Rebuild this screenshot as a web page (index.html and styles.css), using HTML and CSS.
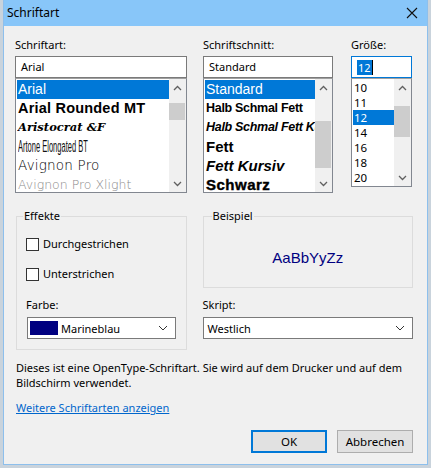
FILE: index.html
```html
<!DOCTYPE html>
<html lang="de">
<head>
<meta charset="utf-8">
<title>Schriftart</title>
<link rel="stylesheet" href="styles.css">
</head>
<body>
<div class="window">
  <div class="titlebar">
    <span class="title">Schriftart</span>
    <svg class="close" width="12" height="12" viewBox="0 0 12 12"><path d="M1 1 L11 11 M11 1 L1 11" stroke="#111" stroke-width="1.1" fill="none"/></svg>
  </div>
  <div class="content">
    <div class="top-row">
      <div class="col col-font">
        <div class="label">Schriftart:</div>
        <div class="edit">Arial</div>
        <div class="list list-font">
          <div class="items">
            <div class="item sel f-arial">Arial</div>
            <div class="item f-rounded">Arial Rounded MT</div>
            <div class="item f-aristo">Aristocrat &amp;F</div>
            <div class="item f-artone"><span>Artone Elongated BT</span></div>
            <div class="item f-avignon">Avignon Pro</div>
            <div class="item f-xlight">Avignon Pro Xlight</div>
          </div>
          <div class="scrollbar">
            <div class="sb-btn"><svg width="9" height="6" viewBox="0 0 9 6"><path d="M1 5 L4.5 1.5 L8 5" stroke="#606060" stroke-width="1.3" fill="none"/></svg></div>
            <div class="track"><div class="thumb"></div></div>
            <div class="sb-btn"><svg width="9" height="6" viewBox="0 0 9 6"><path d="M1 1 L4.5 4.5 L8 1" stroke="#606060" stroke-width="1.3" fill="none"/></svg></div>
          </div>
        </div>
      </div>
      <div class="col col-style">
        <div class="label">Schriftschnitt:</div>
        <div class="edit">Standard</div>
        <div class="list list-style">
          <div class="items">
            <div class="item sel s-std">Standard</div>
            <div class="item s-hsf">Halb Schmal Fett</div>
            <div class="item s-hsfk">Halb Schmal Fett Kursiv</div>
            <div class="item s-fett">Fett</div>
            <div class="item s-fk">Fett Kursiv</div>
            <div class="item s-schwarz">Schwarz</div>
          </div>
          <div class="scrollbar">
            <div class="sb-btn"><svg width="9" height="6" viewBox="0 0 9 6"><path d="M1 5 L4.5 1.5 L8 5" stroke="#606060" stroke-width="1.3" fill="none"/></svg></div>
            <div class="track"><div class="thumb"></div></div>
            <div class="sb-btn"><svg width="9" height="6" viewBox="0 0 9 6"><path d="M1 1 L4.5 4.5 L8 1" stroke="#606060" stroke-width="1.3" fill="none"/></svg></div>
          </div>
        </div>
      </div>
      <div class="col col-size">
        <div class="label">Größe:</div>
        <div class="edit edit-focus"><span class="seltext">12</span><span class="caret"></span></div>
        <div class="list list-size">
          <div class="items">
            <div class="item">10</div>
            <div class="item">11</div>
            <div class="item sel">12</div>
            <div class="item">14</div>
            <div class="item">16</div>
            <div class="item">18</div>
            <div class="item">20</div>
          </div>
          <div class="scrollbar">
            <div class="sb-btn"><svg width="9" height="6" viewBox="0 0 9 6"><path d="M1 5 L4.5 1.5 L8 5" stroke="#606060" stroke-width="1.3" fill="none"/></svg></div>
            <div class="track"><div class="thumb"></div></div>
            <div class="sb-btn"><svg width="9" height="6" viewBox="0 0 9 6"><path d="M1 1 L4.5 4.5 L8 1" stroke="#606060" stroke-width="1.3" fill="none"/></svg></div>
          </div>
        </div>
      </div>
    </div>

    <div class="mid-row">
      <fieldset class="group effects">
        <legend>Effekte</legend>
        <div class="check"><span class="box"></span>Durchgestrichen</div>
        <div class="check check2"><span class="box"></span>Unterstrichen</div>
        <div class="label farbe">Farbe:</div>
        <div class="combo combo-color">
          <span class="swatch"></span><span class="combo-text">Marineblau</span>
          <svg class="chev" width="10" height="6" viewBox="0 0 10 6"><path d="M1 1 L5 5 L9 1" stroke="#333" stroke-width="1" fill="none"/></svg>
        </div>
      </fieldset>
      <div class="right-col">
        <fieldset class="group sample">
          <legend>Beispiel</legend>
          <div class="sample-text">AaBbYyZz</div>
        </fieldset>
        <div class="label skript">Skript:</div>
        <div class="combo">
          <span class="combo-text">Westlich</span>
          <svg class="chev" width="10" height="6" viewBox="0 0 10 6"><path d="M1 1 L5 5 L9 1" stroke="#333" stroke-width="1" fill="none"/></svg>
        </div>
      </div>
    </div>

    <p class="info">Dieses ist eine OpenType-Schriftart. Sie wird auf dem Drucker und auf dem<br>Bildschirm verwendet.</p>
    <a class="link" href="#">Weitere Schriftarten anzeigen</a>

    <div class="buttons">
      <button class="btn btn-default">OK</button>
      <button class="btn">Abbrechen</button>
    </div>
  </div>
</div>
</body>
</html>
```

FILE: styles.css
```css
* { box-sizing: border-box; }

html, body { margin: 0; padding: 0; }

body {
  width: 431px;
  height: 468px;
  overflow: hidden;
  background: #c9d3dc;
  font-family: "Noto Sans", "Open Sans", sans-serif;
  font-size: 11px;
  color: #000;
}

.window {
  margin-left: 3px;
  width: 425px;
  height: 465px;
  background: #f0f0f0;
  border: 1px solid #8dbfec;
  border-top: none;
}

.titlebar {
  height: 26px;
  background: #88c6f9;
  display: flex;
  align-items: center;
  justify-content: space-between;
  padding: 0 9px 0 3px;
}
.title { font-size: 12px; line-height: 16px; }
.close { display: block; }

.content {
  padding: 11px 14px 0 11px;
}

.top-row {
  display: grid;
  grid-template-columns: 172px 130px 63px;
  column-gap: 16px;
}
.col-size { margin-left: 2px; }

.label {
  line-height: 16px;
  height: 19px;
  white-space: nowrap;
}

.edit {
  height: 22px;
  border: 1px solid #7a7a7a;
  background: #fff;
  padding-left: 5px;
  line-height: 20px;
  white-space: nowrap;
  overflow: hidden;
}
.edit-focus {
  border-color: #0078d7;
  display: flex;
  align-items: center;
}
.seltext {
  background: #0078d7;
  color: #fff;
  line-height: 15px;
  padding: 0 1px;
}
.caret {
  width: 1px;
  height: 15px;
  background: #000;
}

.list {
  height: 115px;
  border: 1px solid #828790;
  border-top-color: #a0a0a0;
  background: #fff;
  display: flex;
  overflow: hidden;
}
.list-size { height: 109px; }

.items {
  flex: 1;
  min-width: 0;
  padding: 1px 0 0 1px;
  overflow: hidden;
}
.item {
  height: 19px;
  line-height: 19px;
  padding-left: 1px;
  white-space: nowrap;
  overflow: hidden;
  font-family: "Liberation Sans", Arial, sans-serif;
  font-size: 14px;
}
.item.sel {
  background: #0078d7;
  color: #fff;
}

.f-rounded { font-weight: bold; font-size: 14.5px; letter-spacing: 0.2px; }
.f-aristo { font-family: "DejaVu Serif", serif; font-style: italic; font-weight: bold; font-size: 11.5px; letter-spacing: 0; }
.f-artone span { display: inline-block; font-size: 16px; color: #111; transform: scaleX(0.47); transform-origin: left center; }
.f-avignon { font-family: "DejaVu Sans", sans-serif; font-weight: 200; font-size: 13.5px; letter-spacing: 0.2px; }
.f-xlight { font-family: "DejaVu Sans", sans-serif; font-weight: 200; font-size: 12.5px; color: #8a8a8a; letter-spacing: 0; }

.s-hsf { font-weight: bold; font-size: 12.5px; letter-spacing: -0.3px; }
.s-hsfk { font-weight: bold; font-style: italic; font-size: 12.5px; letter-spacing: -0.3px; }
.s-fett { font-weight: bold; font-size: 15px; }
.s-fk { font-weight: bold; font-style: italic; font-size: 15px; }
.s-schwarz { font-weight: 900; font-size: 15px; letter-spacing: 0.5px; -webkit-text-stroke: 0.4px #000; }

.list-size .item {
  height: 15px;
  line-height: 15px;
  font-family: "Noto Sans", sans-serif;
  font-size: 11.5px;
}

.scrollbar {
  width: 17px;
  background: #f0f0f0;
  display: flex;
  flex-direction: column;
}
.sb-btn {
  height: 17px;
  display: flex;
  align-items: center;
  justify-content: center;
}
.track { flex: 1; }
.thumb { background: #cdcdcd; margin: 0 1px 0 0; }
.list-font .thumb { margin-top: 7px; height: 17px; }
.list-style .thumb { margin-top: 25px; height: 47px; }
.list-size .thumb { margin-top: 10px; height: 31px; }

.mid-row {
  display: flex;
  margin-top: 15px;
  margin-left: 1px;
}

.group {
  margin: 0;
  border: 1px solid #dcdcdc;
  min-width: 0;
}
.group legend {
  padding: 0 1px;
  line-height: 16px;
}

.effects {
  width: 171px;
  height: 142px;
  padding: 0 0 0 9px;
}
.effects legend { margin-left: -3px; }

.check {
  display: flex;
  align-items: center;
  line-height: 16px;
  margin-top: 12px;
}
.check2 { margin-top: 14px; }
.box {
  width: 13px;
  height: 13px;
  border: 1px solid #333;
  background: #fff;
  margin-right: 4px;
}
.farbe { margin-top: 15px; height: 20px; }

.combo {
  height: 22px;
  border: 1px solid #7a7a7a;
  background: #fff;
  display: flex;
  align-items: center;
  padding: 0 7px 0 4px;
}
.combo-color {
  width: 149px;
  margin-left: 1px;
  padding-left: 2px;
}
.swatch {
  width: 28px;
  height: 14px;
  background: #000080;
  margin-right: 3px;
}
.combo-text { flex: 1; }
.chev { display: block; }

.right-col {
  width: 211px;
  margin-left: 16px;
}
.sample {
  height: 80px;
  padding: 0 0 0 8px;
}
.sample-text {
  font-family: "Liberation Sans", Arial, sans-serif;
  font-size: 15px;
  color: #000080;
  text-align: center;
  margin: 25px 0 0 -8px;
  line-height: 18px;
}
.skript { margin-top: 9px; height: 20px; }

.info {
  margin: 10px 0 0 1px;
  line-height: 15px;
  white-space: nowrap;
}

.link {
  display: inline-block;
  margin: 10px 0 0 1px;
  line-height: 15px;
  color: #0066cc;
  text-decoration: underline;
}

.buttons {
  display: flex;
  justify-content: flex-end;
  gap: 10px;
  margin-top: 15px;
}
.btn {
  width: 76px;
  height: 23px;
  background: #e1e1e1;
  border: 1px solid #adadad;
  font-family: "Noto Sans", sans-serif;
  font-size: 11.5px;
  color: #000;
  padding: 0;
}
.btn-default {
  border: 2px solid #0078d7;
}
```
